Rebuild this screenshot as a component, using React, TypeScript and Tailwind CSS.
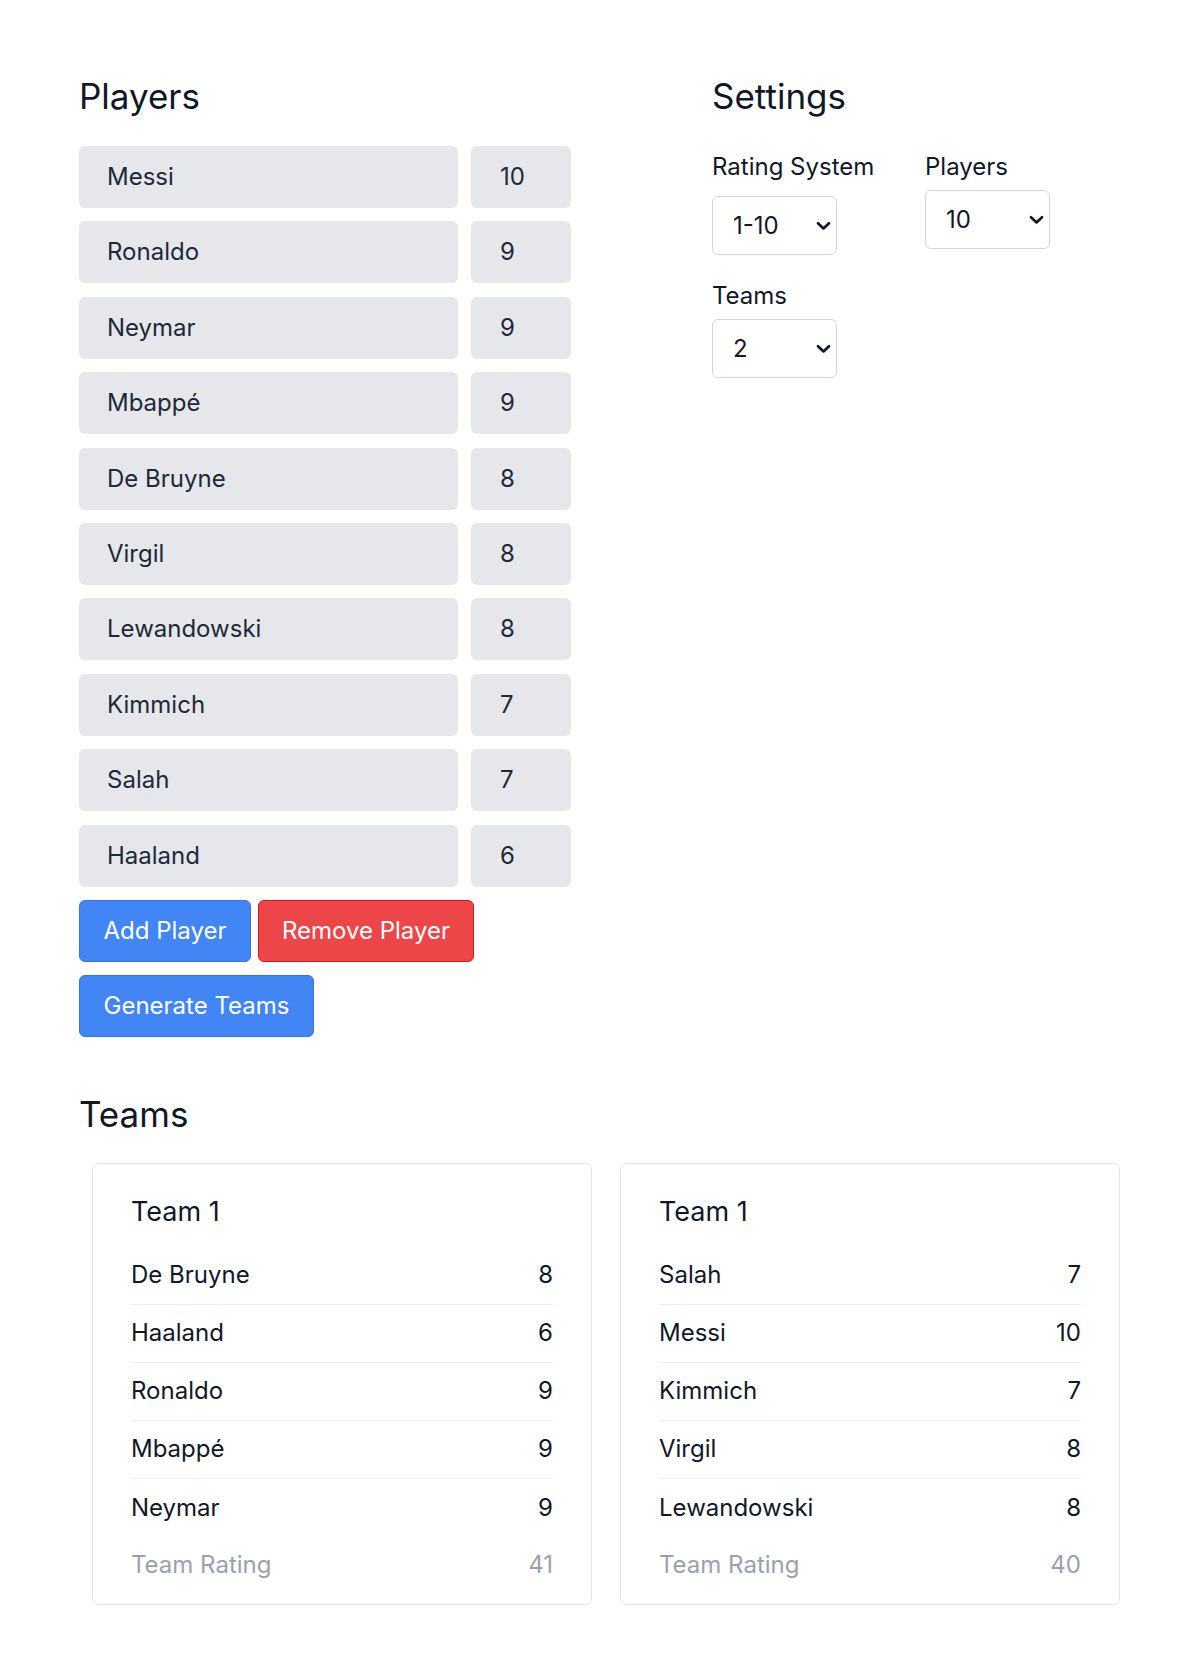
import React from 'react';

const players = [
  { name: 'Messi', rating: 10 },
  { name: 'Ronaldo', rating: 9 },
  { name: 'Neymar', rating: 9 },
  { name: 'Mbappé', rating: 9 },
  { name: 'De Bruyne', rating: 8 },
  { name: 'Virgil', rating: 8 },
  { name: 'Lewandowski', rating: 8 },
  { name: 'Kimmich', rating: 7 },
  { name: 'Salah', rating: 7 },
  { name: 'Haaland', rating: 6 },
];

const teams = [
  {
    title: 'Team 1',
    rating: 41,
    members: [
      { name: 'De Bruyne', rating: 8 },
      { name: 'Haaland', rating: 6 },
      { name: 'Ronaldo', rating: 9 },
      { name: 'Mbappé', rating: 9 },
      { name: 'Neymar', rating: 9 },
    ],
  },
  {
    title: 'Team 1',
    rating: 40,
    members: [
      { name: 'Salah', rating: 7 },
      { name: 'Messi', rating: 10 },
      { name: 'Kimmich', rating: 7 },
      { name: 'Virgil', rating: 8 },
      { name: 'Lewandowski', rating: 8 },
    ],
  },
];

const Chevron = () => (
  <svg width="15" height="10" viewBox="0 0 15 10" fill="none">
    <path d="M2 2.2L7.5 7.4L13 2.2" stroke="#111827" strokeWidth="2.7" strokeLinecap="round" strokeLinejoin="round" />
  </svg>
);

const SelectBox = ({ value }: { value: string }) => (
  <div className="w-[125px] h-[59px] border border-gray-300 rounded-[6px] bg-white flex items-center justify-between pl-[20px] pr-[5px] text-[24px] text-gray-900">
    <span>{value}</span>
    <Chevron />
  </div>
);

export default function App() {
  return (
    <div className="min-h-[1672px] bg-white text-gray-900" style={{ fontFamily: 'Inter, "Noto Sans", sans-serif' }}>
      <div className="pl-[79px] pt-[72px] w-[1198px]">
        <div className="flex">
          {/* players column */}
          <div className="w-[492px]">
            <h2 className="text-[35px] leading-[48px] mb-[26px] text-gray-900">Players</h2>
            <div className="flex flex-col gap-[13.4px]">
              {players.map((p) => (
                <div key={p.name} className="flex gap-[13px]">
                  <div className="w-[379px] h-[62px] rounded-[6px] bg-gray-200 flex items-center pl-[28px] text-[24px] text-gray-800">
                    {p.name}
                  </div>
                  <div className="w-[100px] h-[62px] rounded-[6px] bg-gray-200 flex items-center pl-[29px] text-[24px] text-gray-800">
                    {p.rating}
                  </div>
                </div>
              ))}
            </div>
            <div className="flex gap-[7px] mt-[13px]">
              <button className="w-[172px] h-[62px] rounded-[6px] bg-[#4285f4] border border-[#2f74ea] text-white text-[24px]">
                Add Player
              </button>
              <button className="w-[216px] h-[62px] rounded-[6px] bg-[#ec4649] border border-[#e0141c] text-white text-[24px]">
                Remove Player
              </button>
            </div>
            <button className="mt-[13px] w-[235px] h-[62px] rounded-[6px] bg-[#4285f4] border border-[#2f74ea] text-white text-[24px]">
              Generate Teams
            </button>
          </div>

          {/* settings column */}
          <div className="ml-[141px]">
            <h2 className="text-[35px] leading-[48px] text-gray-900">Settings</h2>
            <div className="flex mt-[29px]">
              <div className="w-[213px]">
                <div className="text-[24px] leading-[36px]">Rating System</div>
                <div className="mt-[11px]">
                  <SelectBox value="1-10" />
                </div>
              </div>
              <div>
                <div className="text-[24px] leading-[36px]">Players</div>
                <div className="mt-[5px]">
                  <SelectBox value="10" />
                </div>
              </div>
            </div>
            <div className="mt-[23px]">
              <div className="text-[24px] leading-[36px]">Teams</div>
              <div className="mt-[5px]">
                <SelectBox value="2" />
              </div>
            </div>
          </div>
        </div>

        {/* teams */}
        <h2 className="text-[35px] leading-[48px] mt-[53px] text-gray-900">Teams</h2>
        <div className="flex gap-[28px] mt-[25px] pl-[13px]">
          {teams.map((t, i) => (
            <div key={i} className="w-[500px] border border-[#e3e5e8] rounded-[6px] px-[38px] pt-[28px] pb-[10px]">
              <div className="text-[27px] leading-[40px] text-gray-900">{t.title}</div>
              <div className="mt-[15px]">
                {t.members.map((m, j) => (
                  <div
                    key={m.name}
                    className={`h-[58px] flex items-center justify-between text-[24px] text-gray-900 ${
                      j < t.members.length - 1 ? 'border-b border-[#eceef1]' : ''
                    }`}
                  >
                    <span>{m.name}</span>
                    <span>{m.rating}</span>
                  </div>
                ))}
                <div className="h-[57px] flex items-center justify-between text-[24px] text-gray-400">
                  <span>Team Rating</span>
                  <span>{t.rating}</span>
                </div>
              </div>
            </div>
          ))}
        </div>
      </div>
    </div>
  );
}
